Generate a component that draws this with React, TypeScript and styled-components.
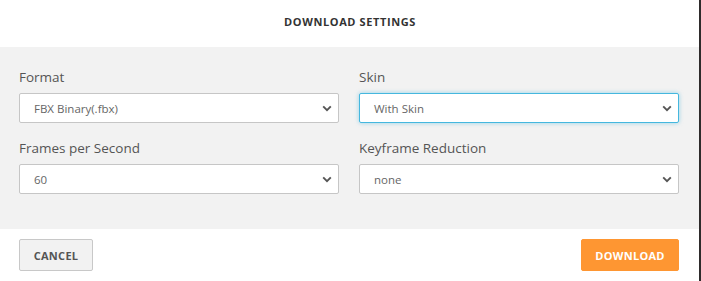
import React from "react";
import styled, { createGlobalStyle } from "styled-components";

const Global = createGlobalStyle`
  html, body { margin: 0; padding: 0; background: #2e2b2b; }
  body { font-family: "Open Sans", "Noto Sans", sans-serif; }
`;

const Dialog = styled.div`
  width: 699px;
  height: 281px;
  background: #ffffff;
  display: flex;
  flex-direction: column;
`;

const Header = styled.div`
  height: 47px;
  display: flex;
  align-items: center;
  justify-content: center;
  padding-bottom: 4px;
  box-sizing: border-box;
`;

const Title = styled.h1`
  margin: 0;
  font-size: 11px;
  font-weight: 700;
  letter-spacing: 0.6px;
  color: #333333;
  padding-left: 1px;
`;

const Body = styled.div`
  background: #f2f2f2;
  height: 182px;
  box-sizing: border-box;
  padding: 20px 20px 0 19px;
  display: grid;
  grid-template-columns: 320px 320px;
  column-gap: 20px;
  row-gap: 15px;
  align-content: start;
`;

const Field = styled.div`
  display: flex;
  flex-direction: column;
  gap: 6px;
`;

const Label = styled.label`
  font-size: 13.5px;
  line-height: 20px;
  color: #555555;
`;

const SelectBox = styled.div<{ $focused?: boolean }>`
  height: 30px;
  box-sizing: border-box;
  background: #ffffff;
  border: 1px solid ${(p) => (p.$focused ? "#45b7de" : "#c6c6c6")};
  border-radius: 2px;
  box-shadow: ${(p) => (p.$focused ? "0 0 4px rgba(69, 183, 222, 0.55)" : "none")};
  display: flex;
  align-items: center;
  justify-content: space-between;
  padding: 0 6px 0 14px;
  font-size: 11.5px;
  color: #666666;
`;

const Chevron = () => (
  <svg width="10" height="7" viewBox="0 0 10 7" aria-hidden="true">
    <path d="M1.2 1.4 L5 5.2 L8.8 1.4" fill="none" stroke="#555555" strokeWidth="1.9" />
  </svg>
);

const Footer = styled.div`
  flex: 1;
  display: flex;
  justify-content: space-between;
  align-items: flex-start;
  padding: 10px 20px 0 19px;
`;

const Button = styled.button<{ $primary?: boolean }>`
  height: 32px;
  box-sizing: border-box;
  border-radius: 2px;
  font-family: inherit;
  font-size: 11px;
  font-weight: 700;
  letter-spacing: 0.3px;
  cursor: pointer;
  background: ${(p) => (p.$primary ? "#fe9632" : "#f2f2f2")};
  color: ${(p) => (p.$primary ? "#ffffff" : "#555555")};
  border: 1px solid ${(p) => (p.$primary ? "#fe9632" : "#c8c8c8")};
  width: ${(p) => (p.$primary ? "98px" : "74px")};
  padding: 0;
`;

const fields = [
  { label: "Format", value: "FBX Binary(.fbx)" },
  { label: "Skin", value: "With Skin", focused: true },
  { label: "Frames per Second", value: "60" },
  { label: "Keyframe Reduction", value: "none" },
];

export default function App() {
  return (
    <>
      <Global />
      <Dialog>
        <Header>
          <Title>DOWNLOAD SETTINGS</Title>
        </Header>
        <Body>
          {fields.map((f) => (
            <Field key={f.label}>
              <Label>{f.label}</Label>
              <SelectBox $focused={f.focused}>
                <span>{f.value}</span>
                <Chevron />
              </SelectBox>
            </Field>
          ))}
        </Body>
        <Footer>
          <Button>CANCEL</Button>
          <Button $primary>DOWNLOAD</Button>
        </Footer>
      </Dialog>
    </>
  );
}
